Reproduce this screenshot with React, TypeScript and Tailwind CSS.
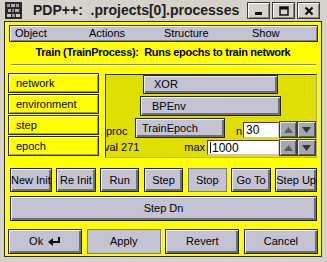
import React from "react";

const raised =
  "border border-[#262626] bg-[#c3c3d3] shadow-[inset_1px_1px_0_#eeeef6,inset_-2px_-2px_0_#6e6e7a]";
const flat = "border border-[#7a7a86] bg-[#c3c3d3]";

function Btn({
  label,
  isFlat,
  left,
  className,
}: {
  label: React.ReactNode;
  isFlat?: boolean;
  left?: boolean;
  className?: string;
}) {
  return (
    <div
      className={`flex items-center whitespace-nowrap text-[11px] text-black ${left ? "justify-start" : "justify-center"} ${
        isFlat ? flat : raised
      } ${className ?? ""}`}
    >
      {label}
    </div>
  );
}

function WinBtn({ children }: { children: React.ReactNode }) {
  return (
    <div className="flex h-[17px] w-[23px] items-center justify-center border border-[#3a3a3a] bg-[#d6d2ca] shadow-[inset_1px_1px_0_#ffffff,inset_-1px_-1px_0_#8a867e]">
      {children}
    </div>
  );
}

function Spin({ up, w }: { up?: boolean; w: string }) {
  return (
    <div
      className={`flex h-[17px] ${w} items-center justify-center border border-[#3c3c44] bg-[#a6a6ae] shadow-[inset_1px_1px_0_#e4e4ec,inset_-1px_-1px_0_#5c5c64]`}
    >
      <svg width="9" height="6" viewBox="0 0 9 6">
        {up ? (
          <path d="M4.5 0 L9 6 L0 6 Z" fill="#5c5c64" />
        ) : (
          <path d="M0 0 L9 0 L4.5 6 Z" fill="#34343c" />
        )}
      </svg>
    </div>
  );
}

function Field({ className, children }: { className: string; children: React.ReactNode }) {
  return (
    <div
      className={`flex items-center border border-t-[#5a3c3c] border-l-[#5a3c3c] border-r-[#d8c4c4] border-b-[#d8c4c4] bg-white pl-[2px] text-[12px] text-black ${className}`}
    >
      {children}
    </div>
  );
}

export default function App() {
  return (
    <div className="flex h-[262px] w-[327px] flex-col bg-[#d6d2ca] font-['Liberation_Sans',Arial,sans-serif]">
      {/* title bar */}
      <div className="flex h-[21px] items-center pl-[5px]">
        <svg width="17" height="17" viewBox="0 0 17 17">
          <rect width="17" height="17" fill="#2a2a2a" />
          <rect x="2" y="2" width="3" height="3" fill="#9a9a9a" />
          <rect x="6" y="2" width="4" height="3" fill="#b0b0b0" />
          <rect x="11" y="2" width="3" height="3" fill="#9a9a9a" />
          <rect x="3" y="7" width="3" height="3" fill="#b0b0b0" />
          <rect x="7" y="7" width="2" height="3" fill="#888" />
          <rect x="10" y="7" width="4" height="3" fill="#b0b0b0" />
          <rect x="2" y="12" width="4" height="3" fill="#c8c8c8" />
          <rect x="7" y="12" width="3" height="3" fill="#9a9a9a" />
          <rect x="11" y="12" width="4" height="3" fill="#c8c8c8" />
        </svg>
        <span className="ml-[11px] whitespace-pre text-[14px] font-bold text-[#202020]">
          PDP++:  .projects[0].processes
        </span>
        <div className="ml-auto mr-[7px] flex gap-[2px]">
          <WinBtn>
            <svg width="10" height="10" viewBox="0 0 10 10">
              <rect x="1" y="6" width="7" height="3" fill="#111" />
            </svg>
          </WinBtn>
          <WinBtn>
            <svg width="10" height="10" viewBox="0 0 10 10">
              <rect x="1" y="1" width="8" height="8" fill="none" stroke="#111" strokeWidth="1.5" />
              <rect x="1" y="1" width="8" height="2.5" fill="#111" />
            </svg>
          </WinBtn>
          <WinBtn>
            <svg width="10" height="10" viewBox="0 0 10 10">
              <path d="M1.5 1.5 L8.5 8.5 M8.5 1.5 L1.5 8.5" stroke="#111" strokeWidth="2.2" />
            </svg>
          </WinBtn>
        </div>
      </div>

      {/* content */}
      <div className="ml-[4px] flex h-[236px] w-[318px] flex-col border border-[#2a2a2a] bg-[#ffff00]">
        {/* menu bar */}
        <div className="ml-[4px] mr-[3px] mt-[3px] flex h-[17px] items-center border border-[#2e2e36] bg-[#c3c3d3] pl-[5px] text-[11px] text-black shadow-[inset_1px_1px_0_#ececf4,inset_-1px_-1px_0_#80808c]">
          <span className="w-[74px]">Object</span>
          <span className="w-[75px]">Actions</span>
          <span className="w-[88px]">Structure</span>
          <span>Show</span>
        </div>

        <div className="mt-[3px] h-[14px] text-center text-[11px] font-bold leading-[14px] tracking-[-0.3px] whitespace-pre text-black">
          Train (TrainProcess):  Runs epochs to train network
        </div>

        <div className="ml-[6px] mr-[5px] mt-[5px] h-[2px] border-t border-b border-t-[#8c8c7c] border-b-[#f4f4e4]" />

        {/* main area */}
        <div className="ml-[3px] mt-[7px] flex items-start">
          <div className="flex w-[91px] flex-col gap-[1px]">
            {["network", "environment", "step", "epoch"].map((t) => (
              <div
                key={t}
                className="flex h-[20px] items-center border border-[#262600] bg-[#ffff00] pl-[7px] text-[11px] text-black shadow-[inset_1px_1px_0_#ffffb0,inset_-1px_-1px_0_#a8a800]"
              >
                {t}
              </div>
            ))}
          </div>

          <div className="ml-[6px] mt-[1px] flex h-[84px] w-[212px] flex-col overflow-hidden border border-t-[#2c2c10] border-l-[#2c2c10] border-r-[#a8a890] border-b-[#a8a890] bg-[#dede00] text-[11px] text-black">
            <Btn label="XOR" left className="ml-[37px] h-[19px] w-[135px] pl-[10px]" />
            <Btn label="BPEnv" left className="ml-[34px] mt-[2px] h-[20px] w-[141px] pl-[11px]" />
            <div className="mt-[2px] flex h-[20px] items-end">
              <span className="w-[29px] leading-[13px]">proc</span>
              <Btn label="TrainEpoch" left className="h-[20px] w-[90px] pl-[6px]" />
              <span className="ml-[11px] w-[7px] leading-[14px]">n</span>
              <Field className="h-[16px] w-[36px]">30</Field>
              <Spin up w="w-[18px]" />
              <Spin w="w-[19px]" />
            </div>
            <div className="mt-[1px] flex h-[17px] items-center">
              <span className="-ml-[2px] whitespace-nowrap">val 271</span>
              <span className="ml-auto mr-[2px]">max</span>
              <Field className="h-[15px] w-[72px]">
                <span className="mr-[1px] h-[11px] w-[1px] bg-black" />
                1000
              </Field>
              <Spin up w="w-[18px]" />
              <Spin w="w-[19px]" />
            </div>
          </div>
        </div>

        {/* action buttons */}
        <div className="ml-[5px] mr-[4px] mt-[10px] flex h-[24px] gap-[4.5px]">
          <Btn label="New Init" className="flex-1" />
          <Btn label="Re Init" className="flex-1" />
          <Btn label="Run" className="flex-1" />
          <Btn label="Step" className="flex-1" />
          <Btn label="Stop" isFlat className="flex-1" />
          <Btn label="Go To" className="flex-1" />
          <Btn label="Step Up" className="flex-1" />
        </div>
        <Btn label="Step Dn" className="ml-[5px] mr-[4px] mt-[4px] h-[25px]" />

        <div className="ml-[3px] mr-[3px] mt-[8px] flex h-[25px] gap-[4.3px]">
          <Btn
            className="flex-1"
            label={
              <span className="flex items-center gap-[5px]">
                Ok
                <svg width="13" height="9" viewBox="0 0 13 9">
                  <path d="M11 0 V5 H4" stroke="#111" strokeWidth="2" fill="none" />
                  <path d="M0 5 L5 1 L5 9 Z" fill="#111" />
                </svg>
              </span>
            }
          />
          <Btn label="Apply" isFlat className="flex-1" />
          <Btn label="Revert" className="flex-1" />
          <Btn label="Cancel" className="flex-1" />
        </div>
      </div>
    </div>
  );
}
